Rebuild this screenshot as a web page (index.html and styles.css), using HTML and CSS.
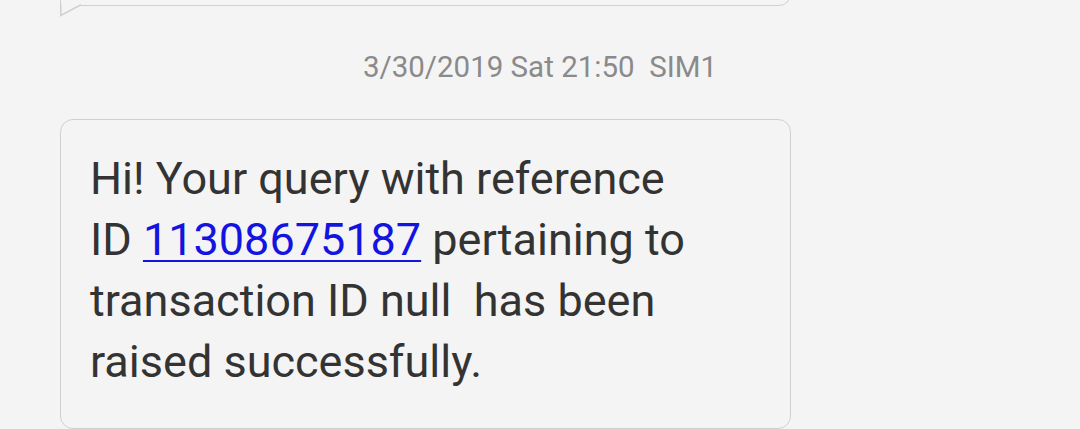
FILE: index.html
```html
<!DOCTYPE html>
<html>
<head>
<meta charset="utf-8">
<link rel="stylesheet" href="styles.css">
</head>
<body>
<div class="thread">
  <div class="bubble bubble-prev">
    <svg class="tail" width="24" height="14" viewBox="0 0 24 14"><path d="M0.75 0 L0.75 11.5 L21 0.75" fill="#f4f4f4" stroke="#d0d0d0" stroke-width="1.5"/></svg>
  </div>
  <div class="stamp">3/30/2019 Sat 21:50&nbsp;&nbsp;SIM1</div>
  <div class="bubble bubble-msg">
    <p class="text">Hi! Your query with reference ID <a class="link" href="#">11308675187</a> pertaining to transaction ID null&nbsp; has been raised successfully.</p>
  </div>
</div>
</body>
</html>
```

FILE: styles.css
```css
html, body {
  margin: 0;
  padding: 0;
  background: #f4f4f4;
  overflow: hidden;
}
body {
  width: 1080px;
  height: 429px;
  font-family: Roboto, "Noto Sans", sans-serif;
}
.thread {
  display: flex;
  flex-direction: column;
}
.bubble {
  width: 731px;
  margin-left: 60px;
  box-sizing: border-box;
  border: 1.5px solid #d0d0d0;
  background: #f4f4f4;
  position: relative;
}
.bubble-prev {
  height: 46px;
  margin-top: -40px;
  border-radius: 12px 12px 12px 0;
}
.tail {
  position: absolute;
  left: -1.5px;
  top: 43px;
  display: block;
}
.stamp {
  text-align: center;
  margin-top: 44px;
  font-size: 29.5px;
  line-height: 34px;
  color: #8a8a8a;
}
.bubble-msg {
  margin-top: 35px;
  height: 310px;
  border-radius: 13px;
  padding: 28px 0 0 29px;
}
.text {
  margin: 0;
  width: 615px;
  font-size: 45px;
  line-height: 61px;
  color: #333333;
}
.link {
  color: #1414e0;
  text-decoration: underline;
  text-decoration-thickness: 2px;
  text-underline-offset: 5px;
}
```
